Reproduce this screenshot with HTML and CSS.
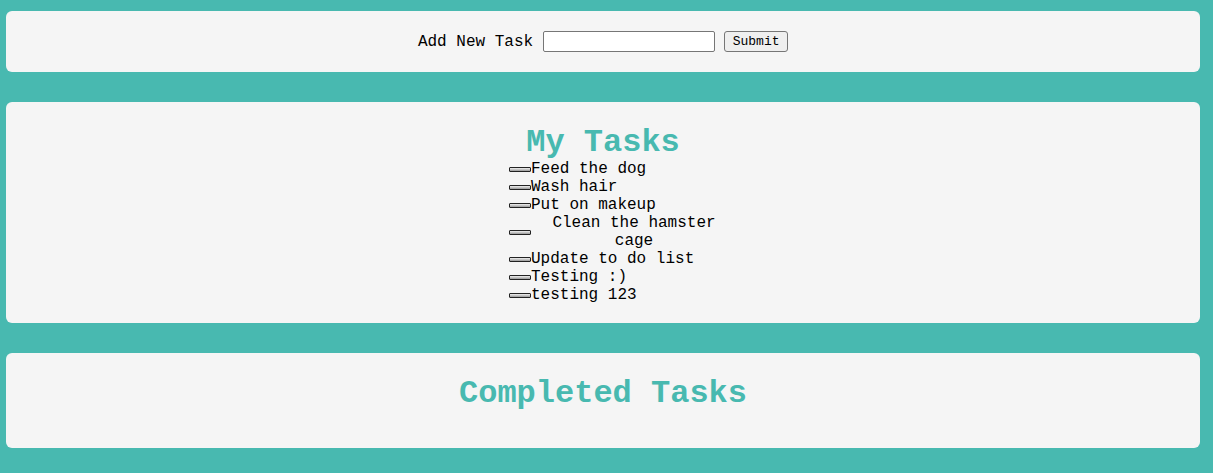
FILE: index.html
```html
<!DOCTYPE html>
<html>
<head>
<meta charset="utf-8">
<link rel="stylesheet" href="styles.css">
</head>
<body>
<div class="page">
  <section class="card card-form">
    <form class="task-form">
      <label class="form-label" for="task">Add New Task</label>
      <input class="task-input" id="task" type="text">
      <button class="submit-btn" type="button">Submit</button>
    </form>
  </section>
  <section class="card card-tasks">
    <h2 class="card-title">My Tasks</h2>
    <ul class="task-list">
      <li class="task"><span class="check"></span><span class="task-text">Feed the dog</span></li>
      <li class="task"><span class="check"></span><span class="task-text">Wash hair</span></li>
      <li class="task"><span class="check"></span><span class="task-text">Put on makeup</span></li>
      <li class="task"><span class="check"></span><span class="task-text">Clean the hamster cage</span></li>
      <li class="task"><span class="check"></span><span class="task-text">Update to do list</span></li>
      <li class="task"><span class="check"></span><span class="task-text">Testing :)</span></li>
      <li class="task"><span class="check"></span><span class="task-text">testing 123</span></li>
    </ul>
  </section>
  <section class="card card-done">
    <h2 class="card-title">Completed Tasks</h2>
  </section>
</div>
</body>
</html>
```
FILE: styles.css
```css
html, body {
  margin: 0;
  padding: 0;
}
body {
  background: #48b9b0;
  font-family: "Liberation Mono", "Courier New", monospace;
  color: #000;
}
.page {
  display: flex;
  flex-direction: column;
  gap: 30px;
  padding: 11px 13px 25px 6px;
}
.card {
  background: #f5f5f5;
  border-radius: 6px;
}
.card-form {
  height: 61px;
  display: flex;
  align-items: center;
  justify-content: center;
}
.task-form {
  display: flex;
  align-items: center;
  font-size: 16px;
}
.form-label {
  margin-right: 10px;
}
.task-input {
  box-sizing: border-box;
  width: 172px;
  height: 21px;
  border: 1px solid #767676;
  border-radius: 2px;
  background: #fff;
  margin: 0 9px 0 0;
  padding: 0 3px;
}
.submit-btn {
  box-sizing: border-box;
  width: 64px;
  height: 21px;
  font-family: "Liberation Mono", "Courier New", monospace;
  font-size: 13px;
  background: #efefef;
  border: 1px solid #767676;
  border-radius: 3px;
  padding: 0;
  color: #000;
}
.card-tasks {
  padding: 23px 0 19px;
  display: flex;
  flex-direction: column;
  align-items: center;
}
.card-title {
  margin: 0;
  font-size: 32px;
  line-height: 35px;
  font-weight: bold;
  color: #48b9b0;
  text-align: center;
}
.task-list {
  list-style: none;
  margin: 0;
  padding: 0 0 0 40px;
  width: 228px;
}
.task {
  display: flex;
  align-items: center;
  text-align: center;
  font-size: 16px;
  line-height: 18px;
}
.check {
  flex: none;
  box-sizing: border-box;
  width: 22px;
  height: 5px;
  border: 1px solid #222;
  background: linear-gradient(#f0f0f0, #999);
  border-radius: 1px;
}
.card-done {
  height: 95px;
  box-sizing: border-box;
  padding-top: 23px;
}
```
